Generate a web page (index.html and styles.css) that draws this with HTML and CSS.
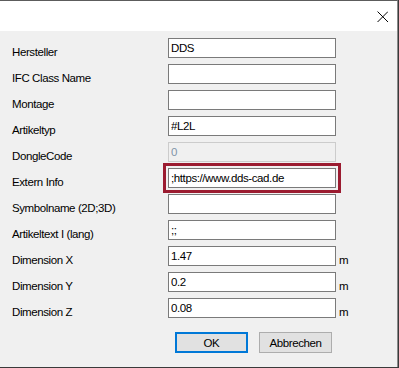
FILE: index.html
```html
<!DOCTYPE html>
<html lang="de">
<head>
    <meta charset="UTF-8">
    <title>Eigenschaften</title>
    <link rel="stylesheet" href="styles.css">
</head>
<body>
    <div class="dialog">
        <div class="titlebar">
            <svg class="close" viewBox="0 0 10 10" width="11" height="11">
                <path d="M0.5,0.5 L10,10 M10,0.5 L0.5,10" stroke="#000" stroke-width="0.9" fill="none" />
            </svg>
        </div>

        <div class="content">
            <div class="form">
                <label>Hersteller</label>
                <input type="text" value="DDS">
                <span></span>

                <label>IFC Class Name</label>
                <input type="text" value="">
                <span></span>

                <label>Montage</label>
                <input type="text" value="">
                <span></span>

                <label>Artikeltyp</label>
                <input type="text" value="#L2L">
                <span></span>

                <label>DongleCode</label>
                <input type="text" value="0" disabled>
                <span></span>

                <label>Extern Info</label>
                <input type="text" class="marked" value=";https://www.dds-cad.de">
                <span></span>

                <label>Symbolname (2D;3D)</label>
                <input type="text" value="">
                <span></span>

                <label>Artikeltext I (lang)</label>
                <input type="text" value=";;">
                <span></span>

                <label>Dimension X</label>
                <input type="text" value="1.47">
                <span class="unit">m</span>

                <label>Dimension Y</label>
                <input type="text" value="0.2">
                <span class="unit">m</span>

                <label>Dimension Z</label>
                <input type="text" value="0.08">
                <span class="unit">m</span>
            </div>

            <div class="buttons">
                <button class="default">OK</button>
                <button>Abbrechen</button>
            </div>
        </div>
    </div>
</body>
</html>
```

FILE: styles.css
```css
body {
    margin: 0;
    padding: 0;
    background-color: #3a3a3a;
    font-family: 'Liberation Sans', Arial, sans-serif;
    font-size: 11.5px;
    letter-spacing: -0.4px;
    color: #000;
}

.dialog {
    width: 397px;
    height: 366px;
    border-top: 1px solid #5c5c5c;
    border-right: 1px solid #8a8a8a;
    background-color: #f0f0f0;
    display: flex;
    flex-direction: column;
}

.titlebar {
    height: 30px;
    background-color: white;
    display: flex;
    align-items: center;
    justify-content: flex-end;
    padding-right: 9px;
}

.close {
    display: block;
}

.content {
    flex: 1;
    padding: 7px 0 0 12px;
}

.form {
    display: grid;
    grid-template-columns: 156px 168px auto;
    grid-auto-rows: 20px;
    row-gap: 6px;
}

.form label {
    align-self: end;
    line-height: 13px;
    margin-bottom: -1px;
}

.form input {
    box-sizing: border-box;
    width: 168px;
    height: 20px;
    margin: 0;
    padding: 0 0 0 2px;
    border: 1px solid #7a7a7a;
    background-color: white;
    font-family: inherit;
    font-size: 11.5px;
    letter-spacing: -0.4px;
    color: #000;
    outline: none;
}

.form input:disabled {
    border-color: #cccccc;
    background-color: #f0f0f0;
    color: #8094a8;
}

.form input.marked {
    outline: 3px solid #9b1b30;
    outline-offset: 2px;
}

.unit {
    align-self: end;
    padding-left: 3px;
    line-height: 13px;
    margin-bottom: -1px;
}

.buttons {
    display: flex;
    gap: 11px;
    margin: 14px 0 0 163px;
}

.buttons button {
    box-sizing: border-box;
    width: 73px;
    height: 21px;
    margin: 0;
    padding: 0;
    border: 1px solid #adadad;
    background-color: #e1e1e1;
    font-family: inherit;
    font-size: 11.5px;
    letter-spacing: -0.4px;
    color: #000;
}

.buttons button.default {
    border: 2px solid #0078d7;
}
```
